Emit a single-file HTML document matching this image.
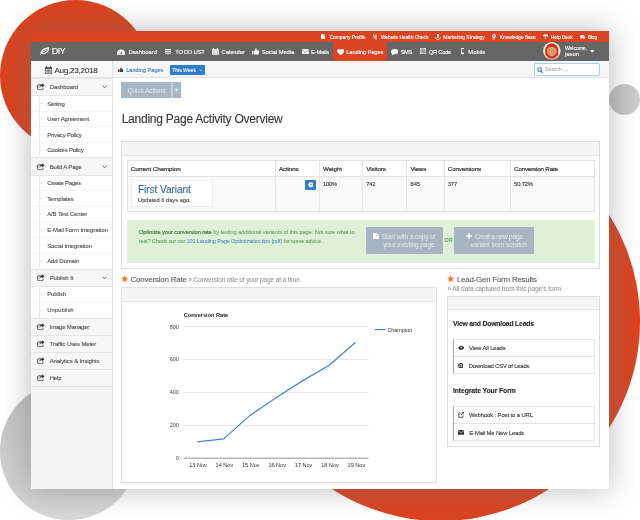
<!DOCTYPE html>
<html lang="en"><head><meta charset="utf-8"><title>DIY - Landing Page Activity Overview</title>
<style>
html,body{margin:0;padding:0}
body{width:640px;height:520px;position:relative;overflow:hidden;background:#fff;font-family:"Liberation Sans", sans-serif;}
.a{position:absolute;display:block}
.t{white-space:nowrap;-webkit-text-stroke:0.1px}
#stage{position:absolute;left:0;top:0;width:640px;height:520px;overflow:hidden;will-change:transform}
</style></head><body>
<div id="stage">
<div class="a" style="left:0;top:0;width:151px;height:151px;border-radius:50%;background:#d9421f"></div>
<div class="a" style="left:240.5px;top:121.5px;width:399px;height:399px;border-radius:50%;background:#da4320"></div>
<div class="a" style="left:0.3px;top:382.3px;width:137.4px;height:137.4px;border-radius:50%;background:linear-gradient(180deg,#bdbdbd,#d6d6d6)"></div>
<div class="a" style="left:609px;top:83.5px;width:31px;height:31px;border-radius:50%;background:linear-gradient(90deg,#bcbcbc,#cfcfcf)"></div>
<div class="a" style="left:6px;top:6px;width:628px;height:508px;overflow:hidden"><div class="a" style="left:25px;top:25px;width:578px;height:457.5px;background:#fff;box-shadow:0 0 29px rgba(110,110,110,0.48)"></div></div>
<div class="a" style="left:31.00px;top:31.00px;width:578.00px;height:11.00px;background:#db4421;"></div>
<div class="a" style="left:31.00px;top:42.00px;width:578.00px;height:19.00px;background:#666666;"></div>
<div class="a" style="left:332.50px;top:42.00px;width:54.50px;height:19.00px;background:#db4421;"></div>
<div class="a" style="left:31.00px;top:61.00px;width:578.00px;height:17.40px;background:#f6f6f6;border-bottom:1px solid #e3e3e3;box-sizing:border-box;"></div>
<div class="a" style="left:31.00px;top:61.00px;width:82.00px;height:427.50px;background:#f4f4f4;border-right:1px solid #e4e4e4;box-sizing:border-box;"></div>
<div class="a" style="left:31.00px;top:61.00px;width:81.00px;height:17.40px;background:#f8f8f8;border-bottom:1px solid #e3e3e3;box-sizing:border-box;"></div>
<span class="a t" id="t0" style="left:329.40px;top:31.01px;font-size:5.02px;line-height:12px;color:#fff;letter-spacing:-0.066px;">Company Profile</span>
<span class="a t" id="t1" style="left:380.80px;top:31.01px;font-size:5.02px;line-height:12px;color:#fff;letter-spacing:-0.097px;">Website Health Check</span>
<span class="a t" id="t2" style="left:443.30px;top:31.01px;font-size:5.02px;line-height:12px;color:#fff;letter-spacing:-0.034px;">Marketing Strategy</span>
<span class="a t" id="t3" style="left:499.70px;top:31.01px;font-size:5.02px;line-height:12px;color:#fff;letter-spacing:-0.126px;">Knowledge Base</span>
<span class="a t" id="t4" style="left:550.80px;top:31.01px;font-size:5.02px;line-height:12px;color:#fff;letter-spacing:-0.139px;">Help Desk</span>
<span class="a t" id="t5" style="left:587.70px;top:31.01px;font-size:5.02px;line-height:12px;color:#fff;letter-spacing:-0.186px;">Blog</span>
<span class="a t" id="t6" style="left:51.80px;top:45.01px;font-size:8.90px;line-height:12px;color:#fff;letter-spacing:-0.479px;-webkit-text-stroke:0.15px #fff;">DIY</span>
<span class="a t" id="t7" style="left:128.40px;top:46.00px;font-size:5.82px;line-height:12px;color:#fff;letter-spacing:0.004px;">Dashboard</span>
<span class="a t" id="t8" style="left:175.30px;top:46.00px;font-size:5.82px;line-height:12px;color:#fff;letter-spacing:-0.302px;">TO DO LIST</span>
<span class="a t" id="t9" style="left:221.60px;top:46.00px;font-size:5.82px;line-height:12px;color:#fff;letter-spacing:-0.052px;">Calendar</span>
<span class="a t" id="t10" style="left:261.70px;top:46.00px;font-size:5.82px;line-height:12px;color:#fff;letter-spacing:-0.068px;">Social Media</span>
<span class="a t" id="t11" style="left:311.10px;top:46.00px;font-size:5.82px;line-height:12px;color:#fff;letter-spacing:-0.214px;">E-Mails</span>
<span class="a t" id="t12" style="left:346.25px;top:46.00px;font-size:5.82px;line-height:12px;color:#fff;letter-spacing:-0.129px;">Landing Pages</span>
<span class="a t" id="t13" style="left:400.80px;top:46.00px;font-size:5.82px;line-height:12px;color:#fff;letter-spacing:-0.569px;">SMS</span>
<span class="a t" id="t14" style="left:428.75px;top:46.00px;font-size:5.82px;line-height:12px;color:#fff;letter-spacing:-0.286px;">QR Code</span>
<span class="a t" id="t15" style="left:468.30px;top:46.00px;font-size:5.82px;line-height:12px;color:#fff;letter-spacing:0.026px;">Mobile</span>
<span class="a t" id="t16" style="left:565.00px;top:43.01px;font-size:4.97px;line-height:12px;color:#fff;">Welcome,</span>
<span class="a t" id="t17" style="left:565.00px;top:48.00px;font-size:5.86px;line-height:12px;color:#fff;">jason</span>
<span class="a t" id="t18" style="left:54.40px;top:65.00px;font-size:8.10px;line-height:12px;color:#333;letter-spacing:-0.249px;">Aug,23,2018</span>
<span class="a t" id="t19" style="left:126.20px;top:64.00px;font-size:5.59px;line-height:12px;color:#3a78b8;">Landing Pages</span>
<div class="a" style="left:169.60px;top:65.00px;width:35.10px;height:10.00px;background:#2f7bd0;border-radius:1px;"></div>
<span class="a t" id="t20" style="left:172.20px;top:64.00px;font-size:5.06px;line-height:12px;color:#fff;">This Week</span>
<div class="a" style="left:534.20px;top:63.30px;width:65.40px;height:12.40px;background:#fff;box-sizing:border-box;border:1px solid #aecfec;border-radius:2px;"></div>
<span class="a t" id="t21" style="left:545.00px;top:63.01px;font-size:5.37px;line-height:12px;color:#aaa;">Search ...</span>
<div class="a" style="left:31.00px;top:78.40px;width:81.00px;height:17.10px;background:#f7f7f7;"></div>
<div class="a" style="left:31.00px;top:95.50px;width:81.00px;height:15.60px;background:#fff;"></div>
<div class="a" style="left:31.00px;top:111.10px;width:81.00px;height:15.50px;background:#fff;"></div>
<div class="a" style="left:31.00px;top:126.60px;width:81.00px;height:15.60px;background:#fff;"></div>
<div class="a" style="left:31.00px;top:142.20px;width:81.00px;height:15.50px;background:#fff;"></div>
<div class="a" style="left:31.00px;top:157.70px;width:81.00px;height:17.60px;background:#f7f7f7;"></div>
<div class="a" style="left:31.00px;top:175.30px;width:81.00px;height:15.50px;background:#fff;"></div>
<div class="a" style="left:31.00px;top:190.80px;width:81.00px;height:15.70px;background:#fff;"></div>
<div class="a" style="left:31.00px;top:206.50px;width:81.00px;height:15.60px;background:#fff;"></div>
<div class="a" style="left:31.00px;top:222.10px;width:81.00px;height:15.70px;background:#fff;"></div>
<div class="a" style="left:31.00px;top:237.80px;width:81.00px;height:15.50px;background:#fff;"></div>
<div class="a" style="left:31.00px;top:253.30px;width:81.00px;height:15.90px;background:#fff;"></div>
<div class="a" style="left:31.00px;top:269.20px;width:81.00px;height:17.10px;background:#f7f7f7;"></div>
<div class="a" style="left:31.00px;top:286.30px;width:81.00px;height:15.90px;background:#fff;"></div>
<div class="a" style="left:31.00px;top:302.20px;width:81.00px;height:15.80px;background:#fff;"></div>
<div class="a" style="left:31.00px;top:318.00px;width:81.00px;height:17.20px;background:#f7f7f7;"></div>
<div class="a" style="left:31.00px;top:335.20px;width:81.00px;height:17.20px;background:#f7f7f7;"></div>
<div class="a" style="left:31.00px;top:352.40px;width:81.00px;height:17.20px;background:#f7f7f7;"></div>
<div class="a" style="left:31.00px;top:369.60px;width:81.00px;height:17.10px;background:#f7f7f7;"></div>
<div class="a" style="left:31.00px;top:77.90px;width:81.00px;height:1.00px;background:#e4e4e4;"></div>
<div class="a" style="left:31.00px;top:95.00px;width:81.00px;height:1.00px;background:#e4e4e4;"></div>
<svg class="a" style="left:36.90px;top:83.05px;" width="7.7" height="7.22" viewBox="0 0 16 15"><path d="M9.500 3.800H3.600A2.400 2.400 0 0 0 1.200 6.200v5.600a2.400 2.400 0 0 0 2.400 2.400h6.600a2.400 2.400 0 0 0 2.400-2.400V10" fill="none" stroke="#3a3a3a" stroke-width="1.900"/><path d="M10.300 0.300L16 4.700l-5.700 4.400V6.600C7.800 6.600 6 7.600 4.800 10.300 5 6.300 7 3.700 10.300 3z" fill="#3a3a3a"/></svg>
<span class="a t" id="t22" style="left:49.70px;top:81.01px;font-size:5.99px;line-height:12px;color:#4c4c4c;letter-spacing:-0.099px;">Dashboard</span>
<svg class="a" style="left:102.20px;top:85.05px;" width="5.2" height="4" viewBox="0 0 10 8"><path d="M1 1.500l4 4 4-4" stroke="#444" stroke-width="1.600" fill="none"/></svg>
<div class="a" style="left:31.00px;top:110.60px;width:81.00px;height:1.00px;background:#f3f3f3;"></div>
<div class="a" style="left:39.20px;top:95.50px;width:0.80px;height:15.60px;background:#e0ebf3;"></div>
<div class="a" style="left:40.00px;top:102.90px;width:2.60px;height:0.80px;background:#e0ebf3;"></div>
<span class="a t" id="t23" style="left:47.20px;top:98.00px;font-size:5.99px;line-height:12px;color:#4c4c4c;letter-spacing:-0.164px;">Setting</span>
<div class="a" style="left:31.00px;top:126.10px;width:81.00px;height:1.00px;background:#f3f3f3;"></div>
<div class="a" style="left:39.20px;top:111.10px;width:0.80px;height:15.50px;background:#e0ebf3;"></div>
<div class="a" style="left:40.00px;top:118.45px;width:2.60px;height:0.80px;background:#e0ebf3;"></div>
<span class="a t" id="t24" style="left:47.20px;top:113.01px;font-size:5.99px;line-height:12px;color:#4c4c4c;letter-spacing:-0.091px;">User Agreement</span>
<div class="a" style="left:31.00px;top:141.70px;width:81.00px;height:1.00px;background:#f3f3f3;"></div>
<div class="a" style="left:39.20px;top:126.60px;width:0.80px;height:15.60px;background:#e0ebf3;"></div>
<div class="a" style="left:40.00px;top:134.00px;width:2.60px;height:0.80px;background:#e0ebf3;"></div>
<span class="a t" id="t25" style="left:47.20px;top:129.01px;font-size:5.99px;line-height:12px;color:#4c4c4c;letter-spacing:-0.198px;">Privacy Policy</span>
<div class="a" style="left:39.20px;top:142.20px;width:0.80px;height:15.50px;background:#e0ebf3;"></div>
<div class="a" style="left:40.00px;top:149.55px;width:2.60px;height:0.80px;background:#e0ebf3;"></div>
<span class="a t" id="t26" style="left:47.20px;top:144.01px;font-size:5.99px;line-height:12px;color:#4c4c4c;letter-spacing:-0.198px;">Cookies Policy</span>
<div class="a" style="left:31.00px;top:157.20px;width:81.00px;height:1.00px;background:#e4e4e4;"></div>
<div class="a" style="left:31.00px;top:174.80px;width:81.00px;height:1.00px;background:#e4e4e4;"></div>
<svg class="a" style="left:36.90px;top:162.60px;" width="7.7" height="7.22" viewBox="0 0 16 15"><path d="M9.500 3.800H3.600A2.400 2.400 0 0 0 1.200 6.200v5.600a2.400 2.400 0 0 0 2.400 2.400h6.600a2.400 2.400 0 0 0 2.400-2.400V10" fill="none" stroke="#3a3a3a" stroke-width="1.900"/><path d="M10.300 0.300L16 4.700l-5.700 4.400V6.600C7.800 6.600 6 7.600 4.800 10.300 5 6.300 7 3.700 10.300 3z" fill="#3a3a3a"/></svg>
<span class="a t" id="t27" style="left:49.70px;top:161.00px;font-size:5.99px;line-height:12px;color:#4c4c4c;letter-spacing:-0.163px;">Build A Page</span>
<svg class="a" style="left:102.20px;top:164.60px;" width="5.2" height="4" viewBox="0 0 10 8"><path d="M1 1.500l4 4 4-4" stroke="#444" stroke-width="1.600" fill="none"/></svg>
<div class="a" style="left:31.00px;top:190.30px;width:81.00px;height:1.00px;background:#f3f3f3;"></div>
<div class="a" style="left:39.20px;top:175.30px;width:0.80px;height:15.50px;background:#e0ebf3;"></div>
<div class="a" style="left:40.00px;top:182.65px;width:2.60px;height:0.80px;background:#e0ebf3;"></div>
<span class="a t" id="t28" style="left:47.20px;top:177.00px;font-size:5.99px;line-height:12px;color:#4c4c4c;letter-spacing:-0.243px;">Create Pages</span>
<div class="a" style="left:31.00px;top:206.00px;width:81.00px;height:1.00px;background:#f3f3f3;"></div>
<div class="a" style="left:39.20px;top:190.80px;width:0.80px;height:15.70px;background:#e0ebf3;"></div>
<div class="a" style="left:40.00px;top:198.25px;width:2.60px;height:0.80px;background:#e0ebf3;"></div>
<span class="a t" id="t29" style="left:47.20px;top:193.01px;font-size:5.99px;line-height:12px;color:#4c4c4c;letter-spacing:-0.077px;">Templates</span>
<div class="a" style="left:31.00px;top:221.60px;width:81.00px;height:1.00px;background:#f3f3f3;"></div>
<div class="a" style="left:39.20px;top:206.50px;width:0.80px;height:15.60px;background:#e0ebf3;"></div>
<div class="a" style="left:40.00px;top:213.90px;width:2.60px;height:0.80px;background:#e0ebf3;"></div>
<span class="a t" id="t30" style="left:47.20px;top:208.00px;font-size:5.99px;line-height:12px;color:#4c4c4c;letter-spacing:-0.128px;">A/B Test Center</span>
<div class="a" style="left:31.00px;top:237.30px;width:81.00px;height:1.00px;background:#f3f3f3;"></div>
<div class="a" style="left:39.20px;top:222.10px;width:0.80px;height:15.70px;background:#e0ebf3;"></div>
<div class="a" style="left:40.00px;top:229.55px;width:2.60px;height:0.80px;background:#e0ebf3;"></div>
<span class="a t" id="t31" style="left:47.20px;top:224.01px;font-size:5.99px;line-height:12px;color:#4c4c4c;letter-spacing:-0.081px;">E-Mail Form Integration</span>
<div class="a" style="left:31.00px;top:252.80px;width:81.00px;height:1.00px;background:#f3f3f3;"></div>
<div class="a" style="left:39.20px;top:237.80px;width:0.80px;height:15.50px;background:#e0ebf3;"></div>
<div class="a" style="left:40.00px;top:245.15px;width:2.60px;height:0.80px;background:#e0ebf3;"></div>
<span class="a t" id="t32" style="left:47.20px;top:240.00px;font-size:5.99px;line-height:12px;color:#4c4c4c;letter-spacing:-0.093px;">Social Integration</span>
<div class="a" style="left:39.20px;top:253.30px;width:0.80px;height:15.90px;background:#e0ebf3;"></div>
<div class="a" style="left:40.00px;top:260.85px;width:2.60px;height:0.80px;background:#e0ebf3;"></div>
<span class="a t" id="t33" style="left:47.20px;top:255.00px;font-size:5.99px;line-height:12px;color:#4c4c4c;letter-spacing:-0.085px;">Add Domain</span>
<div class="a" style="left:31.00px;top:268.70px;width:81.00px;height:1.00px;background:#e4e4e4;"></div>
<div class="a" style="left:31.00px;top:285.80px;width:81.00px;height:1.00px;background:#e4e4e4;"></div>
<svg class="a" style="left:36.90px;top:273.85px;" width="7.7" height="7.22" viewBox="0 0 16 15"><path d="M9.500 3.800H3.600A2.400 2.400 0 0 0 1.200 6.200v5.600a2.400 2.400 0 0 0 2.400 2.400h6.600a2.400 2.400 0 0 0 2.400-2.400V10" fill="none" stroke="#3a3a3a" stroke-width="1.900"/><path d="M10.300 0.300L16 4.700l-5.700 4.400V6.600C7.800 6.600 6 7.600 4.800 10.300 5 6.300 7 3.700 10.300 3z" fill="#3a3a3a"/></svg>
<span class="a t" id="t34" style="left:49.70px;top:272.00px;font-size:5.99px;line-height:12px;color:#4c4c4c;letter-spacing:-0.103px;">Publish It</span>
<svg class="a" style="left:102.20px;top:275.85px;" width="5.2" height="4" viewBox="0 0 10 8"><path d="M1 1.500l4 4 4-4" stroke="#444" stroke-width="1.600" fill="none"/></svg>
<div class="a" style="left:31.00px;top:301.70px;width:81.00px;height:1.00px;background:#f3f3f3;"></div>
<div class="a" style="left:39.20px;top:286.30px;width:0.80px;height:15.90px;background:#e0ebf3;"></div>
<div class="a" style="left:40.00px;top:293.85px;width:2.60px;height:0.80px;background:#e0ebf3;"></div>
<span class="a t" id="t35" style="left:47.20px;top:288.00px;font-size:5.99px;line-height:12px;color:#4c4c4c;letter-spacing:-0.121px;">Publish</span>
<div class="a" style="left:39.20px;top:302.20px;width:0.80px;height:15.80px;background:#e0ebf3;"></div>
<div class="a" style="left:40.00px;top:309.70px;width:2.60px;height:0.80px;background:#e0ebf3;"></div>
<span class="a t" id="t36" style="left:47.20px;top:304.01px;font-size:5.99px;line-height:12px;color:#4c4c4c;letter-spacing:-0.015px;">Unpublish</span>
<div class="a" style="left:31.00px;top:317.50px;width:81.00px;height:1.00px;background:#e4e4e4;"></div>
<div class="a" style="left:31.00px;top:334.70px;width:81.00px;height:1.00px;background:#e4e4e4;"></div>
<svg class="a" style="left:36.90px;top:322.70px;" width="7.7" height="7.22" viewBox="0 0 16 15"><path d="M9.500 3.800H3.600A2.400 2.400 0 0 0 1.200 6.200v5.600a2.400 2.400 0 0 0 2.400 2.400h6.600a2.400 2.400 0 0 0 2.400-2.400V10" fill="none" stroke="#3a3a3a" stroke-width="1.900"/><path d="M10.300 0.300L16 4.700l-5.700 4.400V6.600C7.800 6.600 6 7.600 4.800 10.300 5 6.300 7 3.700 10.300 3z" fill="#3a3a3a"/></svg>
<span class="a t" id="t37" style="left:49.70px;top:321.01px;font-size:5.99px;line-height:12px;color:#4c4c4c;letter-spacing:-0.188px;">Image Manager</span>
<div class="a" style="left:31.00px;top:334.70px;width:81.00px;height:1.00px;background:#e4e4e4;"></div>
<div class="a" style="left:31.00px;top:351.90px;width:81.00px;height:1.00px;background:#e4e4e4;"></div>
<svg class="a" style="left:36.90px;top:339.90px;" width="7.7" height="7.22" viewBox="0 0 16 15"><path d="M9.500 3.800H3.600A2.400 2.400 0 0 0 1.200 6.200v5.600a2.400 2.400 0 0 0 2.400 2.400h6.600a2.400 2.400 0 0 0 2.400-2.400V10" fill="none" stroke="#3a3a3a" stroke-width="1.900"/><path d="M10.300 0.300L16 4.700l-5.700 4.400V6.600C7.800 6.600 6 7.600 4.800 10.300 5 6.300 7 3.700 10.300 3z" fill="#3a3a3a"/></svg>
<span class="a t" id="t38" style="left:49.70px;top:338.00px;font-size:5.99px;line-height:12px;color:#4c4c4c;letter-spacing:-0.116px;">Traffic Uses Meter</span>
<div class="a" style="left:31.00px;top:351.90px;width:81.00px;height:1.00px;background:#e4e4e4;"></div>
<div class="a" style="left:31.00px;top:369.10px;width:81.00px;height:1.00px;background:#e4e4e4;"></div>
<svg class="a" style="left:36.90px;top:357.10px;" width="7.7" height="7.22" viewBox="0 0 16 15"><path d="M9.500 3.800H3.600A2.400 2.400 0 0 0 1.200 6.200v5.600a2.400 2.400 0 0 0 2.400 2.400h6.600a2.400 2.400 0 0 0 2.400-2.400V10" fill="none" stroke="#3a3a3a" stroke-width="1.900"/><path d="M10.300 0.300L16 4.700l-5.700 4.400V6.600C7.800 6.600 6 7.600 4.800 10.300 5 6.300 7 3.700 10.300 3z" fill="#3a3a3a"/></svg>
<span class="a t" id="t39" style="left:49.70px;top:355.00px;font-size:5.99px;line-height:12px;color:#4c4c4c;letter-spacing:-0.116px;">Analytics &amp; Insights</span>
<div class="a" style="left:31.00px;top:369.10px;width:81.00px;height:1.00px;background:#e4e4e4;"></div>
<div class="a" style="left:31.00px;top:386.20px;width:81.00px;height:1.00px;background:#e4e4e4;"></div>
<svg class="a" style="left:36.90px;top:374.25px;" width="7.7" height="7.22" viewBox="0 0 16 15"><path d="M9.500 3.800H3.600A2.400 2.400 0 0 0 1.200 6.200v5.600a2.400 2.400 0 0 0 2.400 2.400h6.600a2.400 2.400 0 0 0 2.400-2.400V10" fill="none" stroke="#3a3a3a" stroke-width="1.900"/><path d="M10.300 0.300L16 4.700l-5.700 4.400V6.600C7.800 6.600 6 7.600 4.800 10.300 5 6.300 7 3.700 10.300 3z" fill="#3a3a3a"/></svg>
<span class="a t" id="t40" style="left:49.70px;top:372.01px;font-size:5.99px;line-height:12px;color:#4c4c4c;letter-spacing:-0.180px;">Help</span>
<div class="a" style="left:121.00px;top:82.00px;width:50.00px;height:16.00px;background:#a6b6c3;"></div>
<div class="a" style="left:171.00px;top:82.00px;width:2.00px;height:16.00px;background:#c6d0d9;"></div>
<div class="a" style="left:173.00px;top:82.00px;width:7.60px;height:16.00px;background:#a6b6c3;"></div>
<span class="a t" id="t41" style="left:127.75px;top:85.00px;font-size:6.27px;line-height:12px;color:#e2e8ed;-webkit-text-stroke:0;">Quick Actions</span>
<svg class="a" style="left:174.70px;top:89.30px;" width="3.6" height="2.4" viewBox="0 0 6 4"><path d="M0 0h6L3 4z" fill="#fff"/></svg>
<span class="a t" id="t42" style="left:121.70px;top:113.01px;font-size:12.00px;line-height:12px;color:#363636;letter-spacing:-0.243px;-webkit-text-stroke:0.12px;">Landing Page Activity Overview</span>
<div class="a" style="left:121.00px;top:141.00px;width:479.00px;height:128.00px;background:#fff;box-sizing:border-box;border:1px solid #dedede;"></div>
<div class="a" style="left:122.00px;top:142.00px;width:477.00px;height:14.00px;background:#f5f5f5;border-bottom:1px solid #e6e6e6;box-sizing:border-box;"></div>
<div class="a" style="left:127.00px;top:160.00px;width:468.00px;height:52.00px;background:#f9f9f9;box-sizing:border-box;border:1px solid #e2e2e2;"></div>
<div class="a" style="left:128.00px;top:161.00px;width:466.00px;height:16.00px;background:#fff;border-bottom:1px solid #e2e2e2;box-sizing:border-box;"></div>
<div class="a" style="left:275.00px;top:161.00px;width:1.00px;height:50.00px;background:#e6e6e6;"></div>
<div class="a" style="left:318.70px;top:161.00px;width:1.00px;height:50.00px;background:#e6e6e6;"></div>
<div class="a" style="left:362.00px;top:161.00px;width:1.00px;height:50.00px;background:#e6e6e6;"></div>
<div class="a" style="left:406.30px;top:161.00px;width:1.00px;height:50.00px;background:#e6e6e6;"></div>
<div class="a" style="left:443.90px;top:161.00px;width:1.00px;height:50.00px;background:#e6e6e6;"></div>
<div class="a" style="left:510.00px;top:161.00px;width:1.00px;height:50.00px;background:#e6e6e6;"></div>
<span class="a t" id="t43" style="left:130.80px;top:163.01px;font-size:6.24px;line-height:12px;color:#333;letter-spacing:-0.075px;-webkit-text-stroke:0.22px #333;">Current Champion</span>
<span class="a t" id="t44" style="left:279.00px;top:163.01px;font-size:6.24px;line-height:12px;color:#333;letter-spacing:-0.138px;-webkit-text-stroke:0.22px #333;">Actions</span>
<span class="a t" id="t45" style="left:322.90px;top:163.01px;font-size:6.24px;line-height:12px;color:#333;letter-spacing:-0.036px;-webkit-text-stroke:0.22px #333;">Weight</span>
<span class="a t" id="t46" style="left:366.20px;top:163.01px;font-size:6.24px;line-height:12px;color:#333;letter-spacing:-0.081px;-webkit-text-stroke:0.22px #333;">Visitors</span>
<span class="a t" id="t47" style="left:410.50px;top:163.01px;font-size:6.24px;line-height:12px;color:#333;letter-spacing:-0.188px;-webkit-text-stroke:0.22px #333;">Views</span>
<span class="a t" id="t48" style="left:447.80px;top:163.01px;font-size:6.24px;line-height:12px;color:#333;letter-spacing:-0.136px;-webkit-text-stroke:0.22px #333;">Conversions</span>
<span class="a t" id="t49" style="left:514.10px;top:163.01px;font-size:6.24px;line-height:12px;color:#333;letter-spacing:-0.186px;-webkit-text-stroke:0.22px #333;">Conversion Rate</span>
<div class="a" style="left:131.00px;top:180.00px;width:82.00px;height:27.00px;background:#fff;box-sizing:border-box;border:1px solid #eeeeee;"></div>
<span class="a t" id="t50" style="left:138.00px;top:184.01px;font-size:10.15px;line-height:12px;color:#2f5f96;letter-spacing:-0.082px;">First Variant</span>
<span class="a t" id="t51" style="left:138.00px;top:194.00px;font-size:5.72px;line-height:12px;color:#444;">Updated 6 days ago.</span>
<div class="a" style="left:305.00px;top:180.00px;width:11.20px;height:10.00px;background:#2f7bd0;border-radius:1px;"></div>
<svg class="a" style="left:307.80px;top:182.20px;" width="5.6" height="5.6" viewBox="0 0 10 10"><circle cx="5" cy="5" r="3.500" fill="#fff"/><path d="M5 0v10M0 5h10M1.500 1.500l7 7M8.500 1.500l-7 7" stroke="#fff" stroke-width="1.900"/><circle cx="5" cy="5" r="1.450" fill="#2f7bd0"/></svg>
<span class="a t" id="t52" style="left:322.90px;top:178.00px;font-size:5.76px;line-height:12px;color:#333;letter-spacing:-0.134px;">100%</span>
<span class="a t" id="t53" style="left:366.20px;top:178.00px;font-size:5.76px;line-height:12px;color:#333;letter-spacing:-0.171px;">742</span>
<span class="a t" id="t54" style="left:410.50px;top:178.00px;font-size:5.76px;line-height:12px;color:#333;letter-spacing:-0.038px;">845</span>
<span class="a t" id="t55" style="left:447.80px;top:178.00px;font-size:5.76px;line-height:12px;color:#333;letter-spacing:-0.138px;">377</span>
<span class="a t" id="t56" style="left:514.10px;top:178.00px;font-size:5.76px;line-height:12px;color:#333;letter-spacing:-0.141px;">50.72%</span>
<div class="a" style="left:127.00px;top:220.00px;width:468.00px;height:43.40px;background:#dff0d8;"></div>
<span class="a t" id="t57" style="left:139.00px;top:226.01px;font-size:5.61px;line-height:12px;color:#4f8e49;letter-spacing:-0.065px;-webkit-text-stroke:0;"><span style="-webkit-text-stroke:0.2px #43803d;color:#43803d">Optimize your conversion rate</span> by testing additional variants of this page. Not sure what to</span>
<span class="a t" id="t58" style="left:139.00px;top:235.00px;font-size:5.61px;line-height:12px;color:#4f8e49;letter-spacing:-0.150px;-webkit-text-stroke:0;">test? Check our our <span style="color:#3b7cbb">101 Landing Page Optimization tips (pdf)</span> for some advice.</span>
<div class="a" style="left:366.00px;top:227.00px;width:77.00px;height:27.00px;background:#a6b5c2;"></div>
<div class="a" style="left:454.00px;top:227.00px;width:80.00px;height:27.00px;background:#a6b5c2;"></div>
<svg class="a" style="left:372.90px;top:232.90px;" width="5.9" height="6.3" viewBox="0 0 12 13"><path d="M0 0h7v5h5v8H0z M8 0l4 4H8z" fill="#fff"/></svg>
<span class="a t" id="t59" style="left:381.70px;top:231.01px;font-size:6.61px;line-height:12px;color:#e2e8ed;letter-spacing:-0.120px;-webkit-text-stroke:0;">Start with a copy of</span>
<span class="a t" id="t60" style="left:383.20px;top:239.00px;font-size:6.61px;line-height:12px;color:#e2e8ed;letter-spacing:-0.130px;-webkit-text-stroke:0;">your existing page</span>
<span class="a t" id="t61" style="left:444.40px;top:234.00px;font-size:5.60px;line-height:12px;color:#67a75a;font-weight:700;">OR</span>
<svg class="a" style="left:465.50px;top:232.50px;" width="6.2" height="6.2" viewBox="0 0 10 10"><path d="M5 0.500v9M0.500 5h9" stroke="#fff" stroke-width="2.400"/></svg>
<span class="a t" id="t62" style="left:474.70px;top:231.01px;font-size:6.61px;line-height:12px;color:#e2e8ed;letter-spacing:-0.254px;-webkit-text-stroke:0;">Creat a new page</span>
<span class="a t" id="t63" style="left:470.50px;top:239.00px;font-size:6.61px;line-height:12px;color:#e2e8ed;letter-spacing:-0.091px;-webkit-text-stroke:0;">variant from scratch</span>
<svg class="a" style="left:121.20px;top:275.20px;" width="7.3" height="7.4" viewBox="0 0 20 20"><path d="M10 0.500l2.900 6.200 6.600 0.800-4.900 4.600 1.300 6.700L10 15.500l-5.900 3.300 1.300-6.700L0.500 7.500l6.600-0.800z" fill="#f47b20"/></svg>
<span class="a t" id="t64" style="left:130.50px;top:274.00px;font-size:7.95px;line-height:12px;color:#5c5c5c;letter-spacing:-0.201px;">Conversion Rate</span>
<span class="a t" id="t65" style="left:188.30px;top:274.00px;font-size:6.58px;line-height:12px;color:#999;letter-spacing:-0.151px;">» Conversion rate of your page at a time.</span>
<svg class="a" style="left:447.10px;top:275.20px;" width="7.3" height="7.4" viewBox="0 0 20 20"><path d="M10 0.500l2.900 6.200 6.600 0.800-4.900 4.600 1.300 6.700L10 15.500l-5.900 3.300 1.300-6.700L0.500 7.500l6.600-0.800z" fill="#f47b20"/></svg>
<span class="a t" id="t66" style="left:456.90px;top:274.00px;font-size:7.95px;line-height:12px;color:#5c5c5c;letter-spacing:-0.231px;">Lead-Gen Form Results</span>
<span class="a t" id="t67" style="left:447.40px;top:283.01px;font-size:6.58px;line-height:12px;color:#9a9a9a;letter-spacing:-0.097px;">» All data captured from this page's form.</span>
<div class="a" style="left:121.40px;top:287.30px;width:316.00px;height:195.70px;background:#fff;box-sizing:border-box;border:1px solid #dedede;"></div>
<div class="a" style="left:122.40px;top:288.30px;width:314.00px;height:13.30px;background:#f5f5f5;border-bottom:1px solid #e6e6e6;box-sizing:border-box;"></div>
<svg class="a" style="left:122.4px;top:301px" width="314" height="180" viewBox="122.4 301 314 180" font-family="Liberation Sans, sans-serif"><rect x="184" y="326.40000000000003" width="185" height="0.8" fill="#e2e2e2"/><rect x="184" y="359.1" width="185" height="0.8" fill="#e2e2e2"/><rect x="184" y="392.1" width="185" height="0.8" fill="#e2e2e2"/><rect x="184" y="425.0" width="185" height="0.8" fill="#e2e2e2"/><rect x="184" y="457.75" width="185" height="0.75" fill="#707070"/><text x="179.3" y="328.6" font-size="5.5" fill="#444" text-anchor="end">800</text><text x="179.3" y="361.3" font-size="5.5" fill="#444" text-anchor="end">600</text><text x="179.3" y="394.3" font-size="5.5" fill="#444" text-anchor="end">400</text><text x="179.3" y="427.2" font-size="5.5" fill="#444" text-anchor="end">200</text><text x="179.3" y="459.8" font-size="5.5" fill="#444" text-anchor="end">0</text><text x="198.4" y="467.3" font-size="5.55" fill="#333" text-anchor="middle">13 Nov</text><text x="224.8" y="467.3" font-size="5.55" fill="#333" text-anchor="middle">14 Nov</text><text x="251.20000000000002" y="467.3" font-size="5.55" fill="#333" text-anchor="middle">15 Nov</text><text x="277.6" y="467.3" font-size="5.55" fill="#333" text-anchor="middle">16 Nov</text><text x="304.0" y="467.3" font-size="5.55" fill="#333" text-anchor="middle">17 Nov</text><text x="330.40000000000003" y="467.3" font-size="5.55" fill="#333" text-anchor="middle">18 Nov</text><text x="356.8" y="467.3" font-size="5.55" fill="#333" text-anchor="middle">19 Nov</text><text x="184.1" y="317.3" font-size="5.6" font-weight="700" fill="#222">Conversion Rate</text><polyline fill="none" stroke="#4780dd" stroke-width="1.25" stroke-linejoin="round" points="197.6,441.8 224,438.9 250.4,415.4 276.8,397.5 303.2,380.6 329.6,365.2 356,342.3"/><rect x="375.2" y="329" width="10.6" height="1.100" fill="#4780dd"/><text x="387.8" y="331.500" font-size="5.45" fill="#333">Champion</text></svg>
<div class="a" style="left:447.40px;top:295.80px;width:152.60px;height:151.20px;background:#fff;box-sizing:border-box;border:1px solid #dedede;"></div>
<div class="a" style="left:448.40px;top:296.80px;width:150.60px;height:13.10px;background:#f5f5f5;border-bottom:1px solid #e6e6e6;box-sizing:border-box;"></div>
<span class="a t" id="t68" style="left:453.00px;top:318.00px;font-size:6.83px;line-height:12px;color:#222;font-weight:700;letter-spacing:-0.210px;">View and Download Leads</span>
<span class="a t" id="t69" style="left:453.00px;top:385.01px;font-size:6.83px;line-height:12px;color:#222;font-weight:700;letter-spacing:-0.101px;">Integrate Your Form</span>
<div class="a" style="left:452.70px;top:338.60px;width:141.90px;height:35.20px;background:#fff;box-sizing:border-box;border:1px solid #e6e6e6;border-left:1px solid #97a6b5;"></div>
<div class="a" style="left:453.70px;top:355.80px;width:139.90px;height:1.00px;background:#e3e3e3;"></div>
<div class="a" style="left:452.70px;top:405.80px;width:141.90px;height:35.30px;background:#fff;box-sizing:border-box;border:1px solid #e6e6e6;border-left:1px solid #97a6b5;"></div>
<div class="a" style="left:453.70px;top:422.80px;width:139.90px;height:1.00px;background:#e3e3e3;"></div>
<svg class="a" style="left:457.80px;top:345.90px;" width="6.3" height="3.94" viewBox="0 0 12 7.500"><path d="M0 3.750C2 1 4 0 6 0s4 1 6 3.750C10 6.500 8 7.500 6 7.500S2 6.500 0 3.750z" fill="#2e2e2e"/><circle cx="6" cy="3.300" r="1.500" fill="#fff"/></svg>
<span class="a t" id="t70" style="left:469.00px;top:342.01px;font-size:5.89px;line-height:12px;color:#333;letter-spacing:-0.107px;">View All Leads</span>
<svg class="a" style="left:458.10px;top:362.70px;" width="5.4" height="5.4" viewBox="0 0 10 10"><circle cx="5" cy="5" r="3.900" fill="none" stroke="#2e2e2e" stroke-width="1.900"/><path d="M5 2.500v4M3.200 4.800l1.800 2.100 1.800-2.100" stroke="#2e2e2e" stroke-width="1.500" fill="none"/></svg>
<span class="a t" id="t71" style="left:468.80px;top:360.01px;font-size:5.89px;line-height:12px;color:#333;letter-spacing:-0.165px;">Download CSV of Leads</span>
<svg class="a" style="left:458.00px;top:412.30px;" width="6" height="6" viewBox="0 0 12 12"><path d="M5 2H1.500v8.500H10V7" fill="none" stroke="#333" stroke-width="1.600"/><path d="M7 0.500h4.500V5M11 1L5.500 6.500" fill="none" stroke="#333" stroke-width="1.600"/></svg>
<span class="a t" id="t72" style="left:469.00px;top:409.00px;font-size:5.89px;line-height:12px;color:#333;letter-spacing:-0.102px;">Webhook : Post to a URL</span>
<svg class="a" style="left:458.00px;top:430.40px;" width="6" height="4.8" viewBox="0 0 12 9.600"><rect width="12" height="9.600" rx="1" fill="#333"/><path d="M0.500 1.500l5.500 4 5.500-4" stroke="#fff" stroke-width="1.200" fill="none"/></svg>
<span class="a t" id="t73" style="left:469.30px;top:427.01px;font-size:5.89px;line-height:12px;color:#333;letter-spacing:-0.142px;">E-Mail Me New Leads</span>
<svg class="a" style="left:40.30px;top:46.78px;" width="9.4" height="7.83" viewBox="0 0 18 15"><path d="M1.200 13.800C0.300 6.500 6 1.300 17.400 0.600 18 8.500 13 14.300 5.500 13.800 3.800 13.700 2.500 13.300 1.200 13.800z" fill="#fff"/><path d="M4 11.200C4.200 7 8.500 3.900 14.900 3.200 14.700 8 11.200 11.700 6.500 11.600 5.400 11.600 4.500 11.400 4 11.200z" fill="#666666"/><path d="M0.500 14.600C4 10.500 8 7.600 12.600 5.600" stroke="#fff" stroke-width="1.700" fill="none" stroke-linecap="round"/></svg>
<svg class="a" style="left:117.00px;top:48.70px;" width="8" height="6.0" viewBox="0 0 16 12"><path d="M0 9a8 8 0 0 1 16 0c0 1-0.300 2.200-0.800 3H0.800C0.300 11.200 0 10 0 9z" fill="#fff"/><path d="M8 9.500L10 4" stroke="#666666" stroke-width="1.500"/><circle cx="8" cy="9.500" r="1.600" fill="#666666"/><circle cx="3.200" cy="8.500" r="0.900" fill="#666666"/><circle cx="12.800" cy="8.500" r="0.900" fill="#666666"/><circle cx="5" cy="4.500" r="0.900" fill="#666666"/></svg>
<svg class="a" style="left:164.80px;top:48.93px;" width="6.4" height="5.33" viewBox="0 0 12 10"><path d="M0 0h12v2.200H0zM0 3.900h12v2.200H0zM0 7.800h12V10H0z" fill="#fff"/></svg>
<svg class="a" style="left:212.20px;top:47.90px;" width="6.8" height="6.8" viewBox="0 0 14 14"><path d="M0 2.500h14V14H0z" fill="#fff"/><path d="M3 0v4M11 0v4" stroke="#fff" stroke-width="2"/><path d="M1.200 5.500h11.600v7.300H1.200z" fill="#b5b5b5"/><path d="M1.200 8h11.600M1.200 10.400h11.600M4.200 5.500v7.300M7 5.500v7.300M9.800 5.500v7.300" stroke="#fff" stroke-width="0.800"/></svg>
<svg class="a" style="left:252.30px;top:48.20px;" width="7.1" height="6.59" viewBox="0 0 14 13"><path d="M0 6h3v7H0z" fill="#fff"/><path d="M4 6.500C6 5 6.500 3 7 0.500c1.800 0 2.600 1.500 2 4.500h4c1 0 1.200 1 0.800 1.800 0.500 0.700 0.300 1.500-0.200 2 0.300 0.800 0 1.500-0.500 1.900 0.200 1-0.300 2.300-1.600 2.300H7C5.800 13 5 12.500 4 12.500z" fill="#fff"/></svg>
<svg class="a" style="left:302.00px;top:49.13px;" width="6.8" height="5.34" viewBox="0 0 14 11"><rect width="14" height="11" rx="1.200" fill="#fff"/><path d="M0.500 2l6.500 5 6.500-5" stroke="#666666" stroke-width="1.400" fill="none"/></svg>
<svg class="a" style="left:336.90px;top:48.67px;" width="7.3" height="6.26" viewBox="0 0 14 12"><path d="M7 12C3 8.500 0 6.200 0 3.500 0 1.500 1.500 0 3.500 0 5 0 6.300 0.800 7 2 7.700 0.800 9 0 10.500 0 12.500 0 14 1.500 14 3.500 14 6.200 11 8.500 7 12z" fill="#fff"/></svg>
<svg class="a" style="left:391.00px;top:48.83px;" width="7.4" height="6.34" viewBox="0 0 14 12"><ellipse cx="7" cy="5" rx="7" ry="5" fill="#fff"/><path d="M2.500 8L1 12l5-2.500z" fill="#fff"/></svg>
<svg class="a" style="left:419.80px;top:48.20px;" width="6.0" height="6.0" viewBox="0 0 12 12"><path d="M0 0h5v5H0zM7 0h5v5H7zM0 7h5v5H0zM7 7h2v2H7zM10 7h2v2h-2zM7 10h2v2H7zM10 10h2v2h-2z" fill="#fff"/><path d="M1.500 1.500h2v2h-2zM8.500 1.500h2v2h-2zM1.500 8.500h2v2h-2z" fill="#666666"/></svg>
<svg class="a" style="left:460.60px;top:48.41px;" width="3.6" height="6.17" viewBox="0 0 7 12"><rect width="7" height="12" rx="1.300" fill="#fff"/><rect x="1.300" y="1.800" width="4.400" height="7" fill="#666666"/></svg>
<svg class="a" style="left:590.30px;top:50.00px;" width="4.4" height="2.8" viewBox="0 0 8 5"><path d="M0 0h8L4 5z" fill="#fff"/></svg>
<svg class="a" style="left:542.95px;top:42.30px;" width="17.6" height="17.6" viewBox="0 0 36 36"><defs><clipPath id="av"><circle cx="18" cy="18" r="16.200"/></clipPath></defs><circle cx="18" cy="18" r="18" fill="#f1e7cf"/><g clip-path="url(#av)"><rect width="36" height="36" fill="#efe2c2"/><ellipse cx="18" cy="16.500" rx="13.200" ry="13.500" fill="#d22b1c"/><path d="M4.800 17h26.400v9c-2 4-6 5-13.200 5s-11.200-1-13.200-5z" fill="#d22b1c"/><ellipse cx="18" cy="18.500" rx="10" ry="11" fill="#d8a36a"/><path d="M7.500 15C9 7 14 4.500 18 4.500S27 7 28.500 15C25 11.500 21 9.500 15.500 10 12 10.500 9.500 12 7.500 15z" fill="#d22b1c"/><circle cx="12.500" cy="21.500" r="2.200" fill="#e58d76"/><circle cx="23.500" cy="21.500" r="2.200" fill="#e58d76"/><circle cx="14" cy="17.500" r="1" fill="#6b4a3a"/><circle cx="22" cy="17.500" r="1" fill="#6b4a3a"/><path d="M15.500 24.500q2.500 1.500 5 0" stroke="#b5604a" stroke-width="0.900" fill="none"/><path d="M5 36c1-5 6-6.500 13-6.500S30 31 31 36z" fill="#d63a27"/></g></svg>
<svg class="a" style="left:320.60px;top:34.18px;" width="4.2" height="5.04" viewBox="0 0 10 12"><path d="M0 0h6v4h4v8H0zM7 0l3 3H7z" fill="#fff"/></svg>
<svg class="a" style="left:372.80px;top:34.04px;" width="4.6" height="5.52" viewBox="0 0 10 12"><path d="M1.500 0.500v4a2.500 2.500 0 0 0 5 0v-4" fill="none" stroke="#fff" stroke-width="2"/><path d="M4 7v1.500a2.500 2.500 0 0 0 5 0V7" fill="none" stroke="#fff" stroke-width="1.700"/><circle cx="9" cy="5.800" r="1.700" fill="#fff"/></svg>
<svg class="a" style="left:435.00px;top:33.90px;" width="5.8" height="5.8" viewBox="0 0 12 12"><path d="M6 0v9" stroke="#fff" stroke-width="2.200"/><circle cx="6" cy="2" r="2" fill="#fff"/><path d="M0.800 7c0.500 3 2.500 4.200 5.200 4.200S10.700 10 11.200 7" stroke="#fff" stroke-width="1.800" fill="none"/></svg>
<svg class="a" style="left:492.10px;top:33.85px;" width="3.8" height="5.7" viewBox="0 0 8 12"><path d="M4 0a4 4 0 0 1 4 4c0 1.800-1.300 2.500-1.600 4.500H1.600C1.300 6.500 0 5.800 0 4a4 4 0 0 1 4-4z" fill="#fff"/><circle cx="4" cy="4" r="1.700" fill="#db4421"/><path d="M1.800 9.500h4.400v2H1.800z" fill="#fff"/></svg>
<svg class="a" style="left:542.60px;top:34.00px;" width="5.4" height="5.4" viewBox="0 0 12 12"><path d="M0 6a6 5.500 0 0 1 12 0c-1-1-2-1-3 0-1-1-2-1-3 0-1-1-2-1-3 0-1-1-2-1-3 0z" fill="#fff"/><path d="M6 5v5.500a1.300 1.300 0 0 1-2.600 0" stroke="#fff" stroke-width="1.200" fill="none"/></svg>
<svg class="a" style="left:579.60px;top:34.60px;" width="5.6" height="4.4" viewBox="0 0 14 11"><ellipse cx="5.500" cy="4" rx="5.500" ry="4" fill="#fff"/><path d="M2 6.500L1 10l3.500-2z" fill="#fff"/><ellipse cx="9.500" cy="6.500" rx="4.500" ry="3.200" fill="#fff" stroke="#db4421" stroke-width="0.800"/><path d="M12 8.500l1.500 2.500-3.500-1.500z" fill="#fff"/></svg>
<svg class="a" style="left:45.00px;top:65.74px;" width="7.1" height="8.11" viewBox="0 0 14 16"><path d="M0 2.500h14V16H0z" fill="#484848"/><path d="M3.200 0v4M10.800 0v4" stroke="#484848" stroke-width="2"/><path d="M1.300 5.800h11.400v8.900H1.300z" fill="#ffffff"/><path d="M1.300 8.800h11.400M1.300 11.700h11.400M4.200 5.800v8.900M7 5.800v8.900M9.800 5.800v8.900" stroke="#484848" stroke-width="0.900"/></svg>
<svg class="a" style="left:117.50px;top:67.45px;" width="5.5" height="5.11" viewBox="0 0 14 13"><path d="M0 6h3v7H0z" fill="#444"/><path d="M4 6.500C6 5 6.500 3 7 0.500c1.800 0 2.600 1.500 2 4.500h4c1 0 1.200 1 0.800 1.800 0.500 0.700 0.300 1.500-0.200 2 0.300 0.800 0 1.500-0.500 1.900 0.200 1-0.300 2.300-1.600 2.300H7C5.800 13 5 12.500 4 12.500z" fill="#444"/></svg>
<svg class="a" style="left:198.60px;top:69.30px;" width="3.6" height="2.5" viewBox="0 0 8 5.500"><path d="M1 1l3 3 3-3" stroke="#fff" stroke-width="1.500" fill="none"/></svg>
<svg class="a" style="left:536.60px;top:66.90px;" width="6.2" height="6.5" viewBox="0 0 11 11.500"><circle cx="4.500" cy="4.500" r="3.300" fill="none" stroke="#3b7fd0" stroke-width="1.900"/><path d="M7 7l3.300 3.500" stroke="#3b7fd0" stroke-width="2.200" stroke-linecap="round"/></svg>
</div>
</body></html>
